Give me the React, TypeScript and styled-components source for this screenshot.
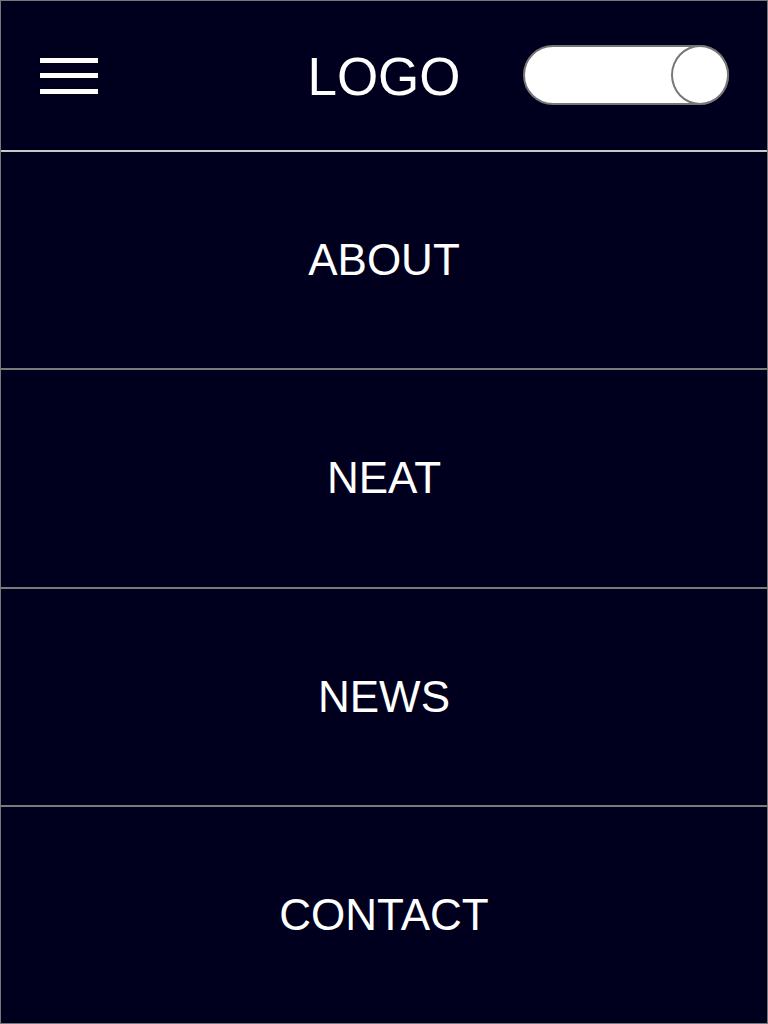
import React from "react";
import styled, { createGlobalStyle } from "styled-components";

const Global = createGlobalStyle`
  html, body { margin: 0; padding: 0; background: #00001e; }
  * { box-sizing: border-box; }
`;

const Page = styled.div`
  width: 768px;
  height: 1024px;
  display: flex;
  flex-direction: column;
  background: #00001e;
  border: 1px solid #777;
  font-family: "Liberation Sans", Arial, sans-serif;
  color: #fff;
`;

const Header = styled.header`
  height: 151px;
  flex: none;
  display: grid;
  grid-template-columns: 1fr auto 1fr;
  align-items: center;
  padding: 0 39px;
  border-bottom: 2px solid #c8c8c8;
`;

const Burger = styled.button`
  width: 58px;
  height: 36px;
  padding: 0;
  background: none;
  border: none;
  display: flex;
  flex-direction: column;
  justify-content: space-between;
  cursor: pointer;
  justify-self: start;
`;

const Bar = styled.span`
  display: block;
  height: 5px;
  background: #fff;
`;

const Logo = styled.div`
  font-size: 53px;
  line-height: 1;
  margin-top: 1px;
`;

const Toggle = styled.div`
  justify-self: end;
  margin-right: -1px;
  margin-top: -2px;
  width: 206px;
  height: 60px;
  border: 2px solid #777;
  border-radius: 30px;
  background: #fff;
  display: flex;
  justify-content: flex-end;
`;

const Knob = styled.div`
  width: 58px;
  height: 60px;
  border-radius: 50%;
  border: 2px solid #777;
  background: #fff;
  margin: -2px -2px 0 0;
`;

const Nav = styled.nav`
  flex: 1;
  display: flex;
  flex-direction: column;
`;

const Item = styled.a`
  flex: 1;
  display: flex;
  align-items: center;
  justify-content: center;
  font-size: 44px;
  color: #fff;
  text-decoration: none;
  border-bottom: 2px solid #7a7a7a;
  &:last-child { border-bottom: none; }
`;

export default function App() {
  const items = ["ABOUT", "NEAT", "NEWS", "CONTACT"];
  return (
    <>
      <Global />
      <Page>
        <Header>
          <Burger aria-label="menu">
            <Bar />
            <Bar />
            <Bar />
          </Burger>
          <Logo>LOGO</Logo>
          <Toggle>
            <Knob />
          </Toggle>
        </Header>
        <Nav>
          {items.map((t) => (
            <Item key={t} href="#">{t}</Item>
          ))}
        </Nav>
      </Page>
    </>
  );
}
